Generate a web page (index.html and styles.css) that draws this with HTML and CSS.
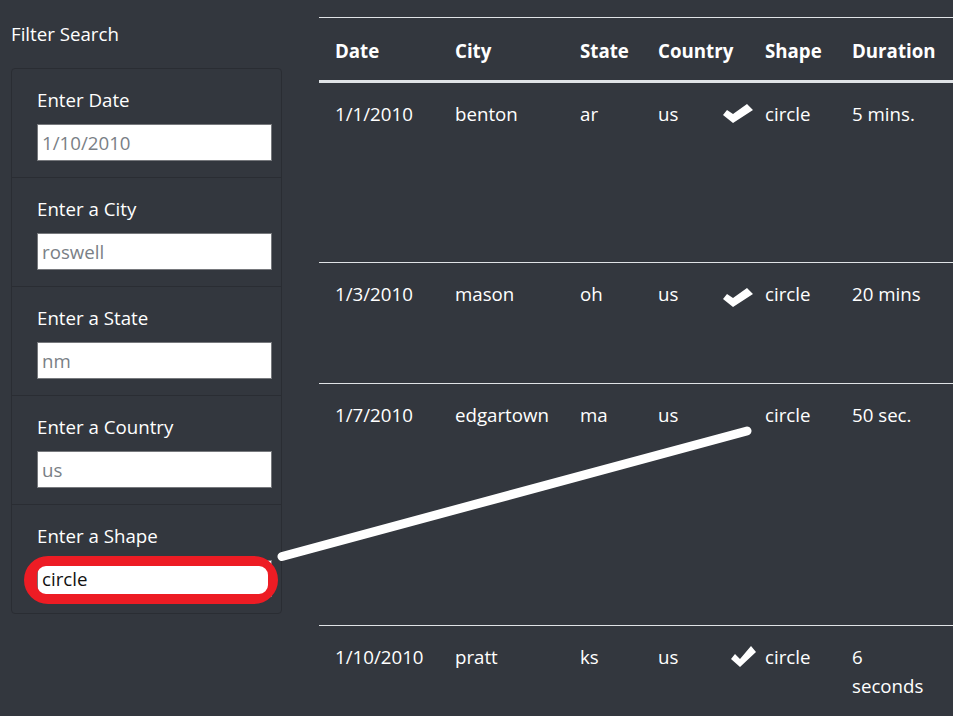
FILE: index.html
```html
<!DOCTYPE html>
<html lang="en">
<head>
<meta charset="utf-8">
<title>UFO Sightings</title>
<link rel="stylesheet" href="styles.css">
</head>
<body>
<div class="page">
  <aside class="sidebar">
    <h5 class="title">Filter Search</h5>
    <ul class="filters">
      <li class="filter"><label for="f-date">Enter Date</label><input id="f-date" class="field" type="text" placeholder="1/10/2010"></li>
      <li class="filter"><label for="f-city">Enter a City</label><input id="f-city" class="field" type="text" placeholder="roswell"></li>
      <li class="filter"><label for="f-state">Enter a State</label><input id="f-state" class="field" type="text" placeholder="nm"></li>
      <li class="filter"><label for="f-country">Enter a Country</label><input id="f-country" class="field" type="text" placeholder="us"></li>
      <li class="filter"><label for="f-shape">Enter a Shape</label><input id="f-shape" class="field" type="text" value="circle"></li>
    </ul>
  </aside>
  <main class="results">
    <table class="ufo">
      <colgroup>
        <col class="c-date"><col class="c-city"><col class="c-state"><col class="c-country"><col class="c-shape"><col class="c-duration"><col class="c-rest">
      </colgroup>
      <thead>
        <tr><th>Date</th><th>City</th><th>State</th><th>Country</th><th>Shape</th><th>Duration</th><th></th></tr>
      </thead>
      <tbody>
        <tr class="r1"><td>1/1/2010</td><td>benton</td><td>ar</td><td>us</td><td>circle</td><td>5 mins.</td><td></td></tr>
        <tr class="r2"><td>1/3/2010</td><td>mason</td><td>oh</td><td>us</td><td>circle</td><td>20 mins</td><td></td></tr>
        <tr class="r3"><td>1/7/2010</td><td>edgartown</td><td>ma</td><td>us</td><td>circle</td><td>50 sec.</td><td></td></tr>
        <tr class="r4"><td>1/10/2010</td><td>pratt</td><td>ks</td><td>us</td><td>circle</td><td>6 seconds</td><td></td></tr>
      </tbody>
    </table>
  </main>
</div>
<svg class="annotations" width="953" height="716" viewBox="0 0 953 716" aria-hidden="true">
  <path fill="#ed1c24" fill-rule="evenodd" d="M48 556 H254 A24 24 0 0 1 278 580 A24 24 0 0 1 254 604 H48 A24 24 0 0 1 24 580 A24 24 0 0 1 48 556 Z M46 566 H259 A9 9 0 0 1 268 575 V585 A9 9 0 0 1 259 594 H46 A9 9 0 0 1 37 585 V575 A9 9 0 0 1 46 566 Z"/>
  <line x1="282" y1="556.5" x2="747" y2="431" stroke="#fff" stroke-width="9" stroke-linecap="round"/>
  <polygon fill="#fff" points="723,115 727,110 733,114 747,104 753,110 733,123"/>
  <polygon fill="#fff" points="723,299 727,294 733,298 747,288 753,294 733,307"/>
  <polygon fill="#fff" points="731,659 735,654 740,659 751,646 756,652 740,667"/>
</svg>
</body>
</html>
```

FILE: styles.css
```css
* { box-sizing: border-box; }

html, body {
  margin: 0;
  padding: 0;
  background: #33373e;
  color: #fff;
  font-family: "Open Sans", "Noto Sans", "DejaVu Sans", sans-serif;
  font-size: 18.7px;
  overflow: hidden;
}

body {
  width: 953px;
  height: 716px;
  position: relative;
}

.page {
  display: flex;
  align-items: flex-start;
}

.sidebar {
  flex: 0 0 319px;
  padding-left: 11px;
}

.title {
  margin: 0;
  padding-top: 20px;
  font-size: 18.7px;
  font-weight: 400;
  line-height: 27px;
}

.filters {
  list-style: none;
  margin: 21px 0 0;
  padding: 0;
  width: 271px;
  border: 1px solid #2a2d33;
  border-radius: 4px;
}

.filter {
  display: flex;
  flex-direction: column;
  padding: 17px 9px 16px 25px;
}

.filter + .filter {
  border-top: 1px solid #2a2d33;
}

.filter label {
  line-height: 27px;
  margin-bottom: 11px;
}

.field {
  height: 37px;
  width: 100%;
  margin: 0;
  padding: 0 4px;
  border: 1px solid #76787c;
  border-radius: 0;
  background: #fff;
  font-family: inherit;
  font-size: 18.7px;
  color: #111;
}

.field::placeholder {
  color: #7a7f86;
  opacity: 1;
}

.results {
  flex: 1 1 auto;
  overflow: hidden;
  padding-top: 17px;
}

.ufo {
  width: 720px;
  table-layout: fixed;
  border-collapse: collapse;
  line-height: 29px;
}

.c-date { width: 120px; }
.c-city { width: 125px; }
.c-state { width: 78px; }
.c-country { width: 107px; }
.c-shape { width: 87px; }
.c-duration { width: 106px; }

.ufo th,
.ufo td {
  padding: 16px 0 16px 16px;
  text-align: left;
  vertical-align: top;
}

.ufo th {
  padding-top: 18px;
  padding-bottom: 15px;
  font-weight: 700;
  border-top: 1px solid #e0e3e6;
  border-bottom: 3px solid #e0e3e6;
}

.ufo tbody tr + tr td {
  border-top: 1px solid #e0e3e6;
}

.ufo td:nth-child(6) {
  padding-right: 10px;
}

.r1 { height: 181px; }
.r2 { height: 121px; }
.r3 { height: 242px; }
.r4 { height: 100px; }

.annotations {
  position: absolute;
  top: 0;
  left: 0;
  pointer-events: none;
}
```
